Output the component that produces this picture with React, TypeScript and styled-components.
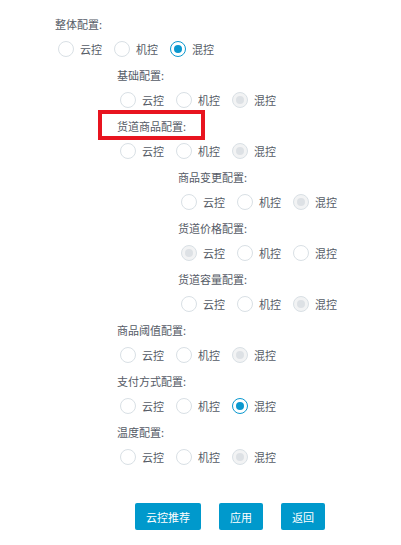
import React from "react";
import styled, { createGlobalStyle } from "styled-components";

type Mode = "cloud" | "machine" | "mixed";
type State = "active" | "locked";

interface Item {
  label: string;
  level: number;
  value: Mode;
  state: State;
  marked?: boolean;
}

const options: { key: Mode; text: string }[] = [
  { key: "cloud", text: "云控" },
  { key: "machine", text: "机控" },
  { key: "mixed", text: "混控" },
];

const items: Item[] = [
  { label: "整体配置:", level: 0, value: "mixed", state: "active" },
  { label: "基础配置:", level: 1, value: "mixed", state: "locked" },
  { label: "货道商品配置:", level: 1, value: "mixed", state: "locked", marked: true },
  { label: "商品变更配置:", level: 2, value: "mixed", state: "locked" },
  { label: "货道价格配置:", level: 2, value: "cloud", state: "locked" },
  { label: "货道容量配置:", level: 2, value: "mixed", state: "locked" },
  { label: "商品阈值配置:", level: 1, value: "mixed", state: "locked" },
  { label: "支付方式配置:", level: 1, value: "mixed", state: "active" },
  { label: "温度配置:", level: 1, value: "mixed", state: "locked" },
];

const indents = [0, 62, 123];

const App = () => {
  return (
    <>
      <Global />
      <Page>
        {items.map((it) => (
          <Group key={it.label} style={{ marginLeft: indents[it.level] }}>
            <LabelWrap>
              <Label>{it.label}</Label>
              {it.marked ? <Mark /> : null}
            </LabelWrap>
            <RadioRow>
              {options.map((o) => {
                const on = it.value === o.key;
                return (
                  <Option key={o.key}>
                    <Circle $on={on} $state={it.state} />
                    <OptText>{o.text}</OptText>
                  </Option>
                );
              })}
            </RadioRow>
          </Group>
        ))}
        <Buttons>
          <Btn>云控推荐</Btn>
          <Btn>应用</Btn>
          <Btn>返回</Btn>
        </Buttons>
      </Page>
    </>
  );
};

export default App;

const Global = createGlobalStyle`
  body {
    margin: 0;
    background: #fff;
    font-family: "Noto Sans CJK SC", "Noto Sans", sans-serif;
    font-size: 11px;
    color: #555b66;
  }
`;

const Page = styled.div`
  width: 401px;
  padding: 14px 0 0 55px;
  box-sizing: border-box;
`;

const Group = styled.div`
  display: flex;
  flex-direction: column;
  gap: 5px;
  margin-bottom: 6px;
`;

const LabelWrap = styled.div`
  position: relative;
  height: 20px;
  display: flex;
  align-items: center;
`;

const Label = styled.span`
  font-size: 11px;
  line-height: 20px;
  color: #555b66;
`;

const Mark = styled.div`
  position: absolute;
  left: -19px;
  top: -6px;
  width: 107px;
  height: 30px;
  box-sizing: border-box;
  border: 4px solid #e8141f;
`;

const RadioRow = styled.div`
  display: flex;
  align-items: center;
  height: 20px;
  padding-left: 3px;
`;

const Option = styled.label`
  display: flex;
  align-items: center;
  margin-right: 12px;
`;

const Circle = styled.span<{ $on: boolean; $state: State }>`
  position: relative;
  width: 16px;
  height: 16px;
  box-sizing: border-box;
  border-radius: 50%;
  border: 1px solid
    ${(p) => (p.$on && p.$state === "active" ? "#0a98cf" : "#d9e0e5")};
  background: ${(p) => (p.$on && p.$state === "locked" ? "#f2f3f4" : "#fff")};
  margin-right: 6px;

  &::after {
    content: "";
    display: ${(p) => (p.$on ? "block" : "none")};
    position: absolute;
    left: 3px;
    top: 3px;
    width: 8px;
    height: 8px;
    border-radius: 50%;
    background: ${(p) => (p.$state === "active" ? "#0a98cf" : "#dde1e5")};
  }
`;

const OptText = styled.span`
  width: 22px;
  font-size: 11px;
  line-height: 20px;
  white-space: nowrap;
  color: #555b66;
`;

const Buttons = styled.div`
  display: flex;
  gap: 18px;
  margin-top: 36px;
  padding-left: 80px;
`;

const Btn = styled.button`
  height: 27px;
  padding: 0 11px;
  border: none;
  border-radius: 2px;
  background: #0099cc;
  color: #fff;
  font-family: "Noto Sans CJK SC", "Noto Sans", sans-serif;
  font-size: 11px;
  cursor: pointer;
`;
